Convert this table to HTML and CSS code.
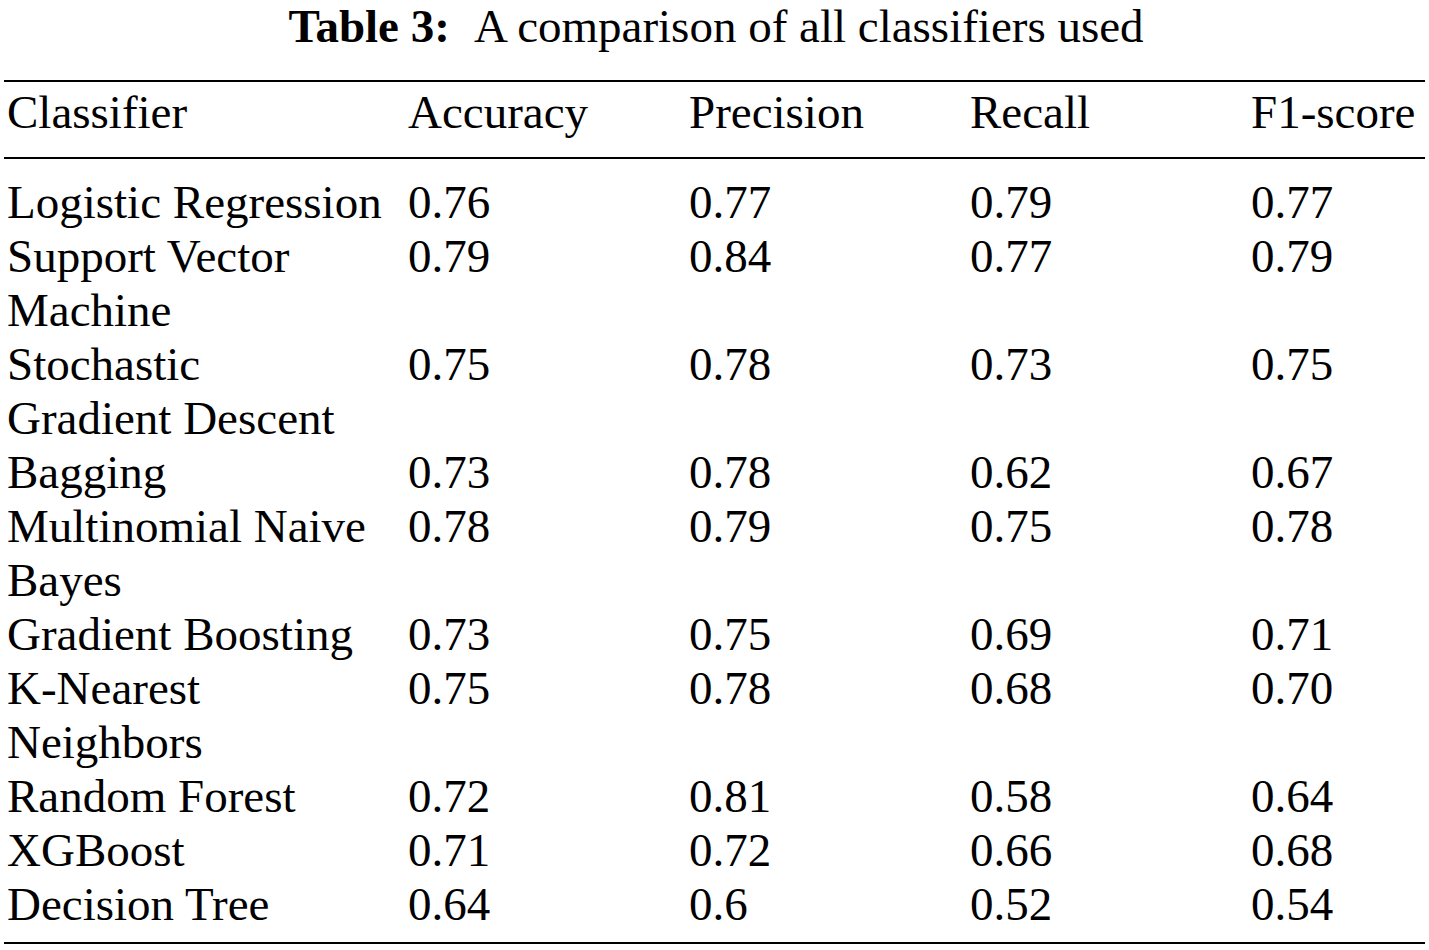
FILE: index.html
```html
<!DOCTYPE html>
<html lang="en">
<head>
<meta charset="utf-8">
<title>Table 3: A comparison of all classifiers used</title>
<link rel="stylesheet" href="styles.css">
</head>
<body>
<div class="page">
  <h1 class="caption"><span class="caption-label">Table 3:</span> A comparison of all classifiers used</h1>
  <table class="results">
    <colgroup>
      <col class="col-name">
      <col class="col-metric">
      <col class="col-metric">
      <col class="col-metric">
      <col class="col-last">
    </colgroup>
    <thead>
      <tr>
        <th>Classifier</th>
        <th>Accuracy</th>
        <th>Precision</th>
        <th>Recall</th>
        <th>F1-score</th>
      </tr>
    </thead>
    <tbody>
      <tr class="first"><td>Logistic Regression</td><td>0.76</td><td>0.77</td><td>0.79</td><td>0.77</td></tr>
      <tr><td>Support Vector<br>Machine</td><td>0.79</td><td>0.84</td><td>0.77</td><td>0.79</td></tr>
      <tr><td>Stochastic<br>Gradient Descent</td><td>0.75</td><td>0.78</td><td>0.73</td><td>0.75</td></tr>
      <tr><td>Bagging</td><td>0.73</td><td>0.78</td><td>0.62</td><td>0.67</td></tr>
      <tr><td>Multinomial Naive<br>Bayes</td><td>0.78</td><td>0.79</td><td>0.75</td><td>0.78</td></tr>
      <tr><td>Gradient Boosting</td><td>0.73</td><td>0.75</td><td>0.69</td><td>0.71</td></tr>
      <tr><td>K-Nearest<br>Neighbors</td><td>0.75</td><td>0.78</td><td>0.68</td><td>0.70</td></tr>
      <tr><td>Random Forest</td><td>0.72</td><td>0.81</td><td>0.58</td><td>0.64</td></tr>
      <tr><td>XGBoost</td><td>0.71</td><td>0.72</td><td>0.66</td><td>0.68</td></tr>
      <tr class="last"><td>Decision Tree</td><td>0.64</td><td>0.6</td><td>0.52</td><td>0.54</td></tr>
    </tbody>
  </table>
</div>
</body>
</html>
```

FILE: styles.css
```css
html, body {
  margin: 0;
  padding: 0;
  background: #ffffff;
}

body {
  font-family: "Liberation Serif", "Times New Roman", serif;
  font-size: 47px;
  color: #000000;
}

.page {
  padding: 0 4px;
}

.caption {
  margin: 0 0 28px 0;
  padding-left: 3px;
  font-size: 47px;
  font-weight: normal;
  line-height: 52px;
  text-align: center;
}

.caption-label {
  font-weight: bold;
  margin-right: 15px;
}

.results {
  width: 1421px;
  border-collapse: collapse;
  table-layout: fixed;
}

.col-name { width: 401px; }
.col-metric { width: 281px; }
.col-last { width: 177px; }

.results th,
.results td {
  padding: 0 0 0 3px;
  text-align: left;
  vertical-align: top;
  font-weight: normal;
  line-height: 54px;
  white-space: nowrap;
}

.results thead tr {
  border-top: 2px solid #000;
  border-bottom: 2px solid #000;
}

.results thead th {
  padding-top: 3px;
  padding-bottom: 18px;
}

.results tbody tr.first td {
  padding-top: 16px;
}

.results tbody tr.last td {
  padding-bottom: 11px;
}

.results tbody {
  border-bottom: 2px solid #000;
}
```
